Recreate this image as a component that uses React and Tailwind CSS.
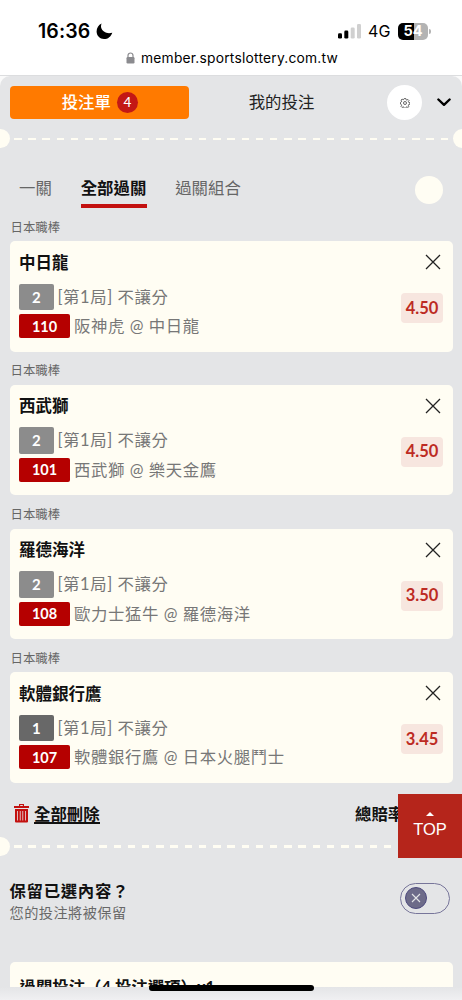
import React from 'react';

const bets = [
  { id: 1, league: '日本職棒', pick: '中日龍', slot: '2', slotColor: 'bg-[#8c8c8c]', code: '110', match: '阪神虎 @ 中日龍', odds: '4.50' },
  { id: 2, league: '日本職棒', pick: '西武獅', slot: '2', slotColor: 'bg-[#8c8c8c]', code: '101', match: '西武獅 @ 樂天金鷹', odds: '4.50' },
  { id: 3, league: '日本職棒', pick: '羅德海洋', slot: '2', slotColor: 'bg-[#8c8c8c]', code: '108', match: '歐力士猛牛 @ 羅德海洋', odds: '3.50' },
  { id: 4, league: '日本職棒', pick: '軟體銀行鷹', slot: '1', slotColor: 'bg-[#686868]', code: '107', match: '軟體銀行鷹 @ 日本火腿鬥士', odds: '3.45' },
];

function StatusBar() {
  return (
    <header className="h-[76px] shrink-0 bg-white border-b border-[#dcdddf] font-['Inter',sans-serif] text-black">
      <div className="flex items-center justify-between h-[46px] pt-4 pl-[38px] pr-[31px]">
        <div className="flex items-center gap-[5px]">
          <span className="w-[53px] text-[19.5px] leading-[30px] font-semibold tracking-[0.1px] whitespace-nowrap">16:36</span>
          <svg width="17" height="17" viewBox="0 0 17 17" fill="currentColor">
            <path d="M5.6.6C4.2 4 5.400 6.800 8 8.600c2.400 1.700 5.200 2 8.300 1.100-1.200 3.800-4.400 6.400-8.300 6.400C3.900 16.100.6 12.800.6 8.600.6 5 2.500 2 5.600.6Z" />
          </svg>
        </div>
        <div className="flex items-center">
          <svg width="24" height="15" viewBox="0 0 24 15">
            <rect x="0" y="9.2" width="4" height="5.3" rx="1.3" />
            <rect x="6.3" y="6.6" width="4" height="7.9" rx="1.3" />
            <rect x="12.7" y="3.5" width="4" height="11" rx="1.3" fill="#d0d0d0" />
            <rect x="19" y="0" width="4" height="14.5" rx="1.3" fill="#d0d0d0" />
          </svg>
          <span className="ml-[6px] w-[23px] text-[16px] tracking-[0.2px]">4G</span>
          <div className="ml-[7px] flex h-[17px] w-[30px] items-center justify-center rounded-[5px] bg-[linear-gradient(90deg,#000_54%,#b3b3b3_54%)] text-[14.5px] font-bold leading-none text-white">
            54
          </div>
          <span className="ml-px h-[5px] w-[2px] rounded-r-full bg-[#b3b3b3]" />
        </div>
      </div>
      <div className="flex items-center h-6 pl-[126px]">
        <svg width="9" height="12" viewBox="0 0 9 12" className="mr-[6px]">
          <path d="M2 6V3.5a2.5 2.5 0 0 1 5 0V6" fill="none" stroke="#8b8b8f" strokeWidth="1.2" />
          <rect x=".5" y="5" width="8" height="6.5" rx="1.2" fill="#8b8b8f" />
        </svg>
        <span className="text-[13.8px] tracking-[0.22px] whitespace-nowrap">member.sportslottery.com.tw</span>
      </div>
    </header>
  );
}

function Perforation() {
  return (
    <div className="flex h-[19px] shrink-0 items-center justify-between overflow-hidden">
      <span className="-ml-[9.5px] size-[19px] shrink-0 rounded-full bg-[#fffdf3]" />
      <span className="mt-px ml-[4.5px] mr-[5px] h-[2.5px] flex-1 bg-[repeating-linear-gradient(90deg,#fffdf3_0_7.5px,transparent_7.5px_14.22px)]" />
      <span className="-mr-[10px] size-[19px] shrink-0 rounded-full bg-[#fffdf3]" />
    </div>
  );
}

function BetCard({ bet }) {
  return (
    <section className="h-[143.8px] px-[9.5px]">
      <div className="h-[28px] pt-[4.5px] pl-px text-[12.4px] leading-5 text-[#666]">{bet.league}</div>
      <div className="flex h-[110.5px] justify-between rounded-[5px] bg-[#fffdf3] px-[9.5px]">
        <div className="pt-[9.5px]">
          <h2 className="h-[33px] text-[16.5px] leading-6 font-bold text-[#111]">{bet.pick}</h2>
          <div className="flex h-[30.5px] items-start">
            <span className={`flex h-[26.5px] w-[34.5px] items-center justify-center rounded-[2px] text-[15px] font-bold text-white ${bet.slotColor}`}>{bet.slot}</span>
            <span className="ml-[4px] text-[16.4px] leading-[26.5px] tracking-[0.6px] text-[#777]">[第1局] 不讓分</span>
          </div>
          <div className="flex items-start">
            <span className="flex h-[24px] w-[51px] items-center justify-center rounded-[2px] bg-[#b50000] pt-px text-[14.5px] font-bold text-white">{bet.code}</span>
            <span className="ml-[4px] text-[16.4px] leading-[23px] tracking-[0.6px] text-[#777]">{bet.match}</span>
          </div>
        </div>
        <div className="flex flex-col items-end pt-[13px]">
          <button aria-label="移除" className="mr-[2px] flex h-[39px] items-start">
            <svg width="16" height="16" viewBox="0 0 16 16" stroke="#222" strokeWidth="1.3">
              <path d="m1 1 14 14M15 1 1 15" />
            </svg>
          </button>
          <span className="flex h-[30px] w-[42px] items-center justify-center rounded-[4px] bg-[#f7e6df] text-[16.5px] font-bold text-[#bd2b23]">{bet.odds}</span>
        </div>
      </div>
    </section>
  );
}

export default function App() {
  return (
    <div className="relative flex h-[1000px] w-[462px] flex-col overflow-hidden bg-[#fafafa] font-['Lato','Noto_Sans_CJK_TC',sans-serif]">
      <StatusBar />
      <main className="flex h-[911px] shrink-0 flex-col overflow-hidden rounded-t-[10px] bg-[#e4e5e7]">
        <div className="flex h-[53px] shrink-0 items-center pl-[9.5px]">
          <button className="flex h-[33.5px] w-[179.5px] items-center justify-center gap-[6px] rounded-[4px] bg-[#ff7a00] pl-px text-[16.4px] font-medium text-white">
            投注單
            <span className="flex size-[21px] items-center justify-center rounded-full bg-[#c31815] text-[13.5px]">4</span>
          </button>
          <button className="ml-[59px] w-[67px] whitespace-nowrap text-[16.4px] text-[#222]">我的投注</button>
          <button aria-label="設定" className="ml-[72px] flex size-[35px] items-center justify-center rounded-full bg-white">
            <svg width="10" height="10" viewBox="0 0 20 20" fill="none" stroke="#444" strokeWidth="1.6">
              <path d="M8.500 1h3l.6 2.500 1.600.7 2.200-1.300 2.100 2.100-1.300 2.200.7 1.600 2.500.6v3l-2.500.6-.7 1.600 1.300 2.200-2.100 2.100-2.200-1.300-1.600.7-.6 2.500h-3l-.6-2.500-1.600-.7-2.200 1.300L2 16.800l1.300-2.200-.7-1.600L.9 12V8.800l1.700-.8.700-1.600L2 4.200l2.100-2.100 2.200 1.300 1.600-.7Z" />
              <circle cx="10" cy="10" r="3" />
            </svg>
          </button>
          <svg width="14" height="9" viewBox="0 0 14 9" className="ml-[14.5px]" fill="none" stroke="#000" strokeWidth="2.4" strokeLinecap="round" strokeLinejoin="round">
            <path d="m1.4 1.5 5.6 5.3 5.6-5.3" />
          </svg>
        </div>

        <Perforation />

        <nav className="flex h-[65px] shrink-0 items-start pt-[27.5px] pl-[19px] text-[16.4px] text-[#666]">
          <button className="w-[33px] whitespace-nowrap leading-6">一關</button>
          <button className="ml-[28.5px] h-[32px] w-[66px] whitespace-nowrap border-b-[4px] border-[#c3100f] pb-1 leading-6 font-bold text-[#111]">全部過關</button>
          <button className="ml-[28.5px] w-[66px] whitespace-nowrap leading-6">過關組合</button>
          <span className="ml-[173.5px] size-[28px] rounded-full bg-[#fffdf3]" />
        </nav>

        <div className="shrink-0">
          {bets.map((bet) => (
            <BetCard key={bet.id} bet={bet} />
          ))}
        </div>

        <div className="flex h-[48.5px] shrink-0 items-start justify-between pt-[14px] pl-[14px] text-[16.4px] leading-6 font-bold text-[#111]">
          <button className="flex items-start gap-[5px]">
            <svg width="15" height="19" viewBox="0 0 15 19" className="mt-[2px]" fill="#c3100f">
              <path d="M5 0h5v2h5v2H0V2h5Zm1.2 1v1h2.6V1Z" fillRule="evenodd" />
              <path d="M1 5h13v12.5a1 1 0 0 1-1 1H2a1 1 0 0 1-1-1Zm2.200 2v9.500h.8V7Zm2.600 0v9.500h.8V7Zm2.600 0v9.500h.8V7Zm2.600 0v9.500h.8V7Z" fillRule="evenodd" />
            </svg>
            <span className="h-[21.5px] border-b-2 border-[#111]">全部刪除</span>
          </button>
          <span className="w-[107px]">總賠率</span>
        </div>

        <Perforation />

        <div className="flex h-[106.5px] shrink-0 items-start justify-between pt-[23px] pl-[9.5px] pr-[12px]">
          <div className="pt-[0.5px]">
            <div className="text-[16.4px] leading-6 font-bold tracking-[0.7px] text-[#111]">保留已選內容？</div>
            <div className="text-[14.2px] leading-5 tracking-[0.45px] text-[#686868]">您的投注將被保留</div>
          </div>
          <button aria-label="保留已選內容" className="mt-[4px] flex h-[31px] w-[50px] items-center rounded-full border border-[#77759a] pl-[4px]">
            <span className="flex size-[22px] items-center justify-center rounded-full border border-[#4d4a7e] bg-[#6d6b89]">
              <svg width="10" height="10" viewBox="0 0 10 10" stroke="#e4e5e7" strokeWidth="1.1">
                <path d="m1 1 8 8M9 1 1 9" />
              </svg>
            </span>
          </button>
        </div>

        <div className="mx-[9.5px] h-[60px] shrink-0 rounded-[5px] bg-[#fffdf3] pt-[13px] pl-[10px] text-[16.4px] leading-6 font-bold whitespace-nowrap text-[#111]">
          過關投注（4 投注選項）x1
        </div>
      </main>
      <div className="h-[13px] shrink-0 bg-linear-to-b from-[#e4e5e7] to-[#f0f0f2]" />

      <button className="absolute top-[794px] right-0 flex h-[64px] w-[64px] flex-col items-center bg-[#b5251b] pt-[18px] font-['Liberation_Sans',sans-serif] text-[16.5px] leading-5 text-white">
        <svg width="8" height="4" viewBox="0 0 8 4" fill="currentColor" className="mb-[3px]">
          <path d="M4 0 8 4H0Z" />
        </svg>
        TOP
      </button>
      <div className="absolute top-[984.5px] left-[149px] h-[6px] w-[164.5px] rounded-full bg-black" />
    </div>
  );
}
